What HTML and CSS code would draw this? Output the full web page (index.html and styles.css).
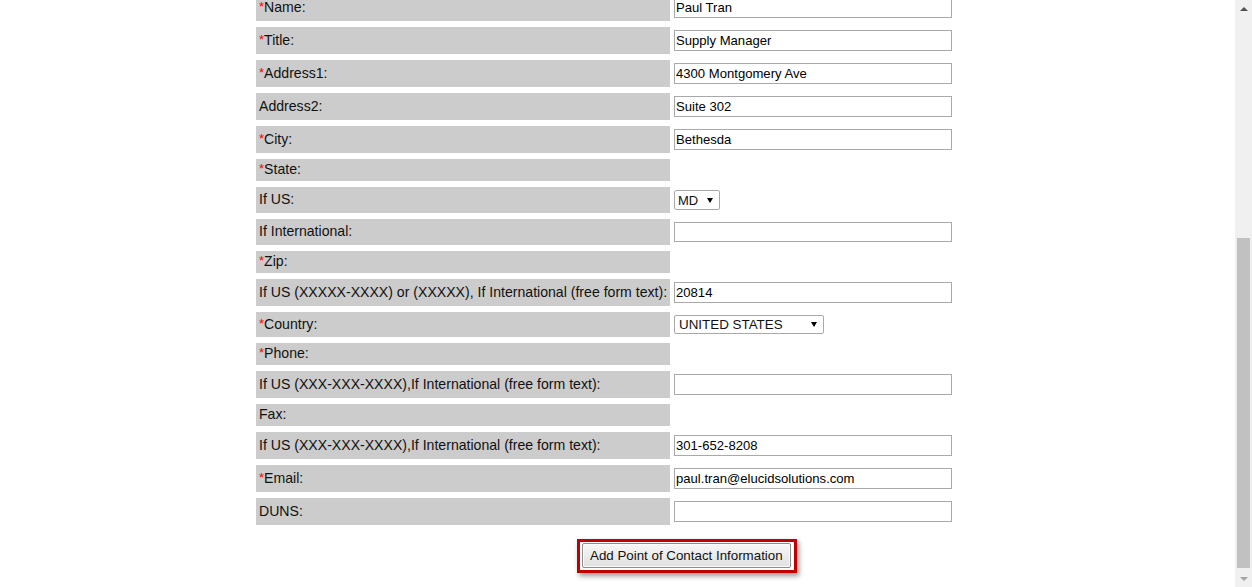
FILE: index.html
```html
<!DOCTYPE html>
<html>
<head>
<meta charset="utf-8">
<title>Point of Contact</title>
<link rel="stylesheet" href="styles.css">
</head>
<body>
<div class="page">
  <div class="form">
    <div class="row"><div class="label"><span class="req">*</span>Name:</div><div class="field"><input class="text" type="text" value="Paul Tran"></div></div>
    <div class="row"><div class="label"><span class="req">*</span>Title:</div><div class="field"><input class="text" type="text" value="Supply Manager"></div></div>
    <div class="row"><div class="label"><span class="req">*</span>Address1:</div><div class="field"><input class="text" type="text" value="4300 Montgomery Ave"></div></div>
    <div class="row"><div class="label">Address2:</div><div class="field"><input class="text" type="text" value="Suite 302"></div></div>
    <div class="row"><div class="label"><span class="req">*</span>City:</div><div class="field"><input class="text" type="text" value="Bethesda"></div></div>
    <div class="row"><div class="label"><span class="req">*</span>State:</div><div class="field"></div></div>
    <div class="row"><div class="label">If US:</div><div class="field"><span class="select select-md"><span>MD</span><span class="caret"></span></span></div></div>
    <div class="row"><div class="label">If International:</div><div class="field"><input class="text text-short" type="text" value=""></div></div>
    <div class="row"><div class="label"><span class="req">*</span>Zip:</div><div class="field"></div></div>
    <div class="row"><div class="label">If US (XXXXX-XXXX) or (XXXXX), If International (free form text):</div><div class="field"><input class="text" type="text" value="20814"></div></div>
    <div class="row"><div class="label"><span class="req">*</span>Country:</div><div class="field"><span class="select select-country"><span>UNITED STATES</span><span class="caret"></span></span></div></div>
    <div class="row"><div class="label"><span class="req">*</span>Phone:</div><div class="field"></div></div>
    <div class="row"><div class="label">If US (XXX-XXX-XXXX),If International (free form text):</div><div class="field"><input class="text" type="text" value=""></div></div>
    <div class="row"><div class="label">Fax:</div><div class="field"></div></div>
    <div class="row"><div class="label">If US (XXX-XXX-XXXX),If International (free form text):</div><div class="field"><input class="text" type="text" value="301-652-8208"></div></div>
    <div class="row"><div class="label"><span class="req">*</span>Email:</div><div class="field"><input class="text" type="text" value="paul.tran@elucidsolutions.com"></div></div>
    <div class="row"><div class="label">DUNS:</div><div class="field"><input class="text" type="text" value=""></div></div>
  </div>
  <div class="actions">
    <div class="highlight"><button class="btn" type="button">Add Point of Contact Information</button></div>
  </div>
</div>
<div class="scrollbar">
  <div class="sb-btn"><span class="sb-up"></span></div>
  <div class="sb-space"></div>
  <div class="sb-thumb"></div>
  <div class="sb-btn sb-btn-bottom"><span class="sb-down"></span></div>
</div>
</body>
</html>
```
FILE: styles.css
```css
html, body {
  margin: 0;
  height: 100%;
  overflow: hidden;
  background: #fff;
}
body {
  font-family: "Liberation Sans", Arial, sans-serif;
  font-size: 13px;
  color: #000;
}
.page {
  padding-left: 256px;
  margin-top: -6px;
}
.form {
  display: flex;
  flex-direction: column;
  gap: 6px;
  width: 696px;
}
.row {
  display: grid;
  grid-template-columns: 414px 278px;
  column-gap: 4px;
}
.label {
  background: #cccccc;
  padding: 2px 3px 4px;
  line-height: 16px;
  font-size: 14.1px;
  display: flex;
  align-items: center;
  white-space: nowrap;
  color: #111;
}
.req {
  color: #f00;
  font-size: 13px;
}
.field {
  padding: 3px 0;
  display: flex;
  align-items: flex-start;
}
.text {
  box-sizing: border-box;
  width: 278px;
  height: 21px;
  margin: 0;
  border: 1px solid #a9a9a9;
  padding: 0 1px;
  font-family: "Liberation Sans", Arial, sans-serif;
  font-size: 13.1px;
  color: #000;
  background: #fff;
  outline: none;
}
.text-short {
  height: 20px;
}
.select {
  display: inline-flex;
  align-items: center;
  justify-content: space-between;
  box-sizing: border-box;
  height: 20px;
  border: 1px solid #a9a9a9;
  border-radius: 2px;
  padding: 0 6px 0 3px;
  background: #fff;
  font-size: 13px;
  color: #111;
}
.select-md {
  width: 46px;
}
.select-country {
  width: 150px;
  height: 19px;
  padding-left: 4px;
  font-size: 13.4px;
}
.caret {
  width: 0;
  height: 0;
  border-left: 3px solid transparent;
  border-right: 3px solid transparent;
  border-top: 5px solid #000;
}
.actions {
  padding-left: 321px;
  margin-top: 14px;
}
.highlight {
  display: inline-block;
  border: 3px solid #c00000;
  padding: 1px 3px 2px 2px;
  box-shadow: 2px 3px 5px rgba(0, 0, 0, 0.4);
}
.btn {
  display: block;
  box-sizing: border-box;
  height: 25px;
  margin: 0;
  padding: 0 7px;
  border: 1px solid #8c8c8c;
  border-radius: 2px;
  background: linear-gradient(#f7f7f7, #e1e1e1);
  box-shadow: inset 0 0 0 1px #fbfbfb;
  font-family: "Liberation Sans", Arial, sans-serif;
  font-size: 13.33px;
  color: #111;
}
.scrollbar {
  position: fixed;
  top: 0;
  right: 0;
  width: 17px;
  height: 100%;
  background: #f0f0f0;
  display: flex;
  flex-direction: column;
  align-items: center;
}
.sb-btn {
  width: 17px;
  height: 17px;
  display: flex;
  align-items: center;
  justify-content: center;
  flex: none;
}
.sb-btn-bottom {
  margin-top: 2px;
}
.sb-up {
  width: 0;
  height: 0;
  border-left: 4px solid transparent;
  border-right: 4px solid transparent;
  border-bottom: 4px solid #505050;
}
.sb-down {
  width: 0;
  height: 0;
  border-left: 4px solid transparent;
  border-right: 4px solid transparent;
  border-top: 4px solid #a3a3a3;
}
.sb-space {
  height: 221px;
  flex: none;
}
.sb-thumb {
  width: 13px;
  flex: 1;
  background: #c1c1c1;
}
```
